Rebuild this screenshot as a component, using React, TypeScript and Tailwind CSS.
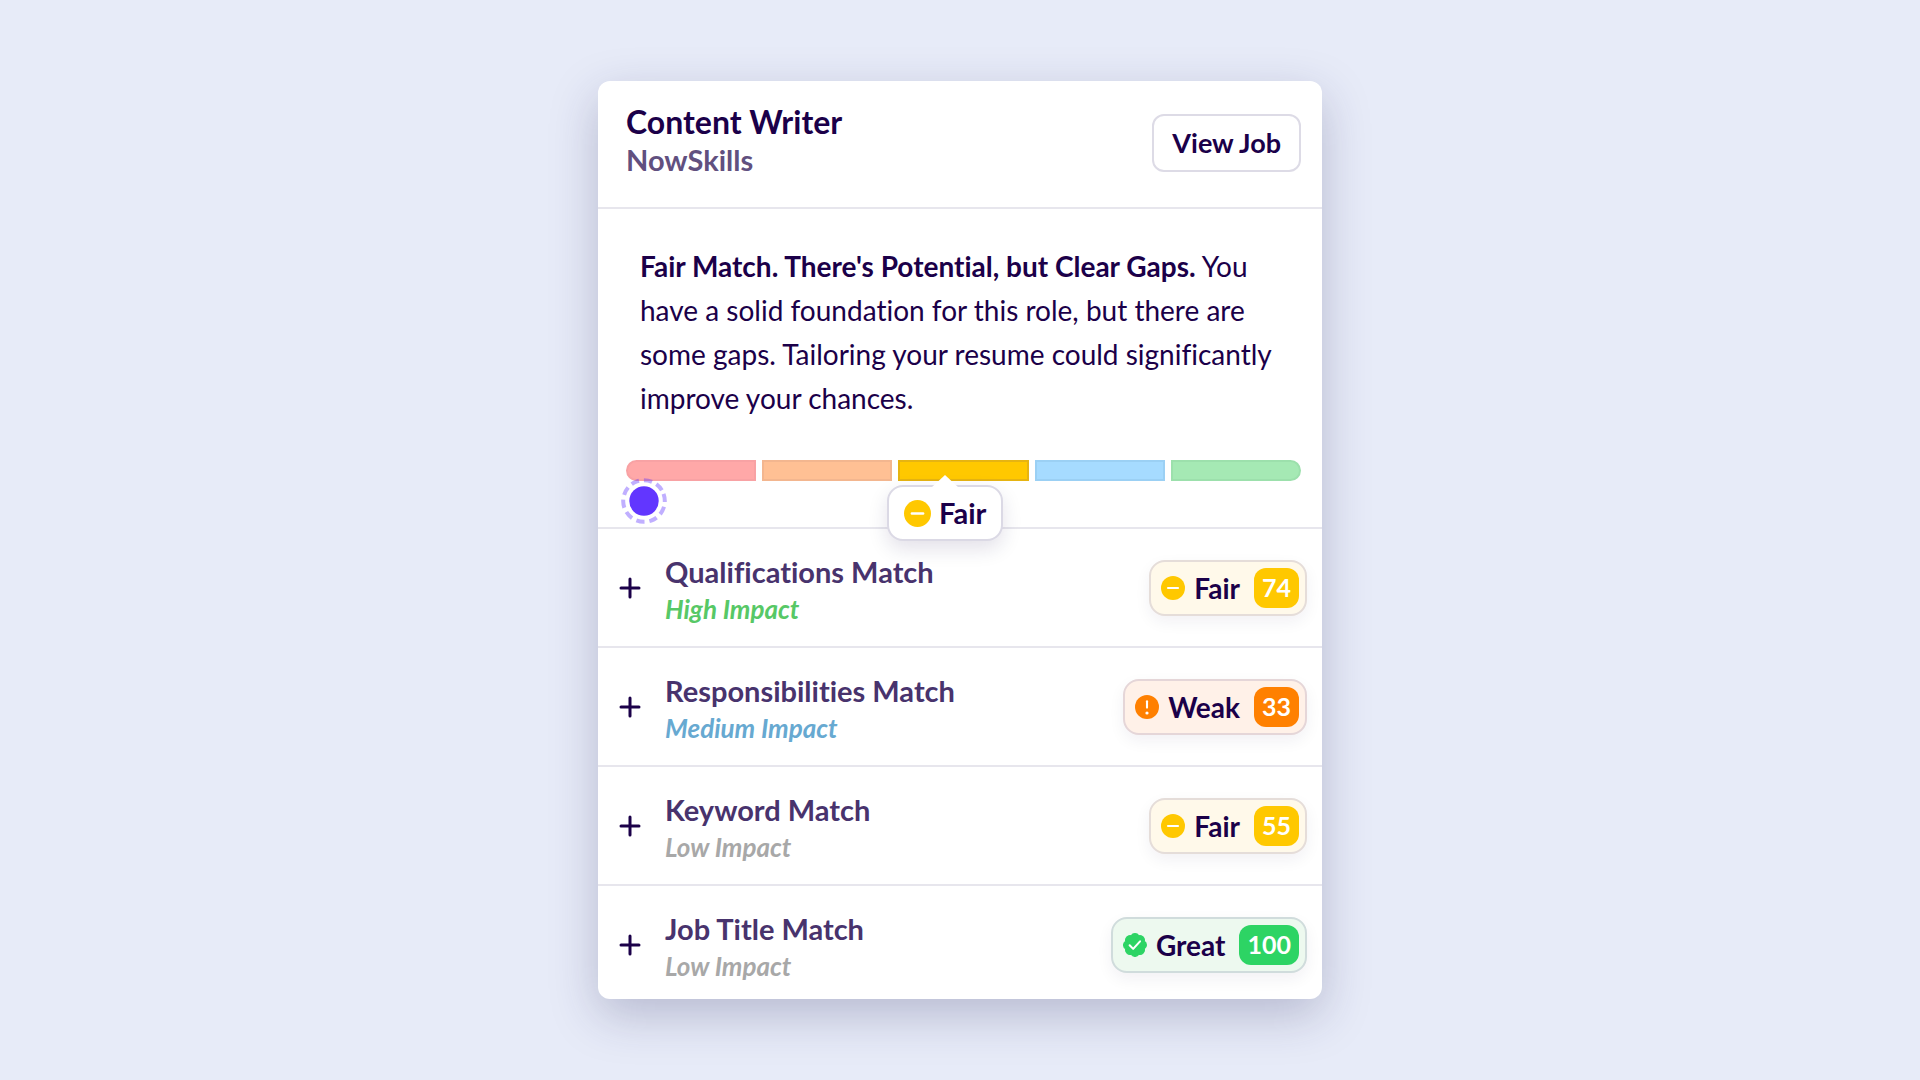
type Level = 'fair' | 'weak' | 'great';

interface Match {
  title: string;
  impact: string;
  impactClass: string;
  level: Level;
  score: number;
}

const MATCHES: Match[] = [
  { title: 'Qualifications Match', impact: 'High Impact', impactClass: 'text-[#57c866]', level: 'fair', score: 74 },
  { title: 'Responsibilities Match', impact: 'Medium Impact', impactClass: 'text-[#67a9d1]', level: 'weak', score: 33 },
  { title: 'Keyword Match', impact: 'Low Impact', impactClass: 'text-[#a8a8a8]', level: 'fair', score: 55 },
  { title: 'Job Title Match', impact: 'Low Impact', impactClass: 'text-[#a8a8a8]', level: 'great', score: 100 },
];

const LEVELS = {
  fair: { label: 'Fair', pill: 'bg-[#fff9ea] border-[#e5ddd9]', score: 'bg-[#ffc800]' },
  weak: { label: 'Weak', pill: 'bg-[#fff1e8] border-[#e5d6d8]', score: 'bg-[#ff8000]' },
  great: { label: 'Great', pill: 'bg-[#edf9ef] border-[#d0dcdc]', score: 'bg-[#2dd464]' },
};

const SEGMENTS = [
  'rounded-l-full border-[#f8a2a4] bg-[#ffa8a8]',
  'border-[#f3b68f] bg-[#ffc094]',
  'border-[#e6b412] bg-[#ffc800]',
  'border-[#9bd0f4] bg-[#a6dbff]',
  'rounded-r-full border-[#9ce0ac] bg-[#a5e9b4]',
];

function LevelIcon({ level, className }: { level: Level; className: string }) {
  if (level === 'great') {
    return (
      <svg viewBox="1.5 1.5 21 21" className={className} aria-hidden="true">
        <path
          d="M3.85 8.62a4 4 0 0 1 4.78-4.77 4 4 0 0 1 6.74 0 4 4 0 0 1 4.78 4.78 4 4 0 0 1 0 6.74 4 4 0 0 1-4.77 4.78 4 4 0 0 1-6.75 0 4 4 0 0 1-4.78-4.77 4 4 0 0 1 0-6.76Z"
          fill="#2dd464"
          stroke="#2dd464"
          strokeLinejoin="round"
        />
        <path d="m7.3 12.2 3.1 3.2 6-6.6" fill="none" stroke="#fff" strokeWidth="1.8" strokeLinecap="round" strokeLinejoin="round" />
      </svg>
    );
  }
  return (
    <svg viewBox="0 0 24 24" className={className} aria-hidden="true">
      <circle cx="12" cy="12" r="12" fill={level === 'fair' ? '#ffc800' : '#ff8000'} />
      {level === 'fair' ? (
        <path d="M7 12h10" stroke="#fff" strokeWidth="2.2" strokeLinecap="round" />
      ) : (
        <>
          <path d="M12 6.2v6.4" stroke="#fff" strokeWidth="2.1" strokeLinecap="round" />
          <circle cx="12" cy="18" r="1.6" fill="#fff" />
        </>
      )}
    </svg>
  );
}

function MatchRow({ match }: { match: Match }) {
  const level = LEVELS[match.level];

  return (
    <li className="flex h-[119px] items-center border-t-2 border-[#e7e6ed] pr-[15px] pl-[21px]">
      <button type="button" aria-label={`Expand ${match.title}`} className="shrink-0">
        <svg viewBox="0 0 22 22" className="size-[22px]" fill="none" stroke="#1b0049" strokeWidth="3" strokeLinecap="round">
          <path d="M11 2v18M2 11h18" />
        </svg>
      </button>
      <div className="ml-6 flex-1 pt-1">
        <h2 className="text-[29px] leading-[38px] font-bold text-[#48336d]">{match.title}</h2>
        <p className={`text-[26px] leading-[36px] font-bold italic ${match.impactClass}`}>{match.impact}</p>
      </div>
      <div className={`flex h-14 items-center rounded-2xl border-2 pr-[6px] pl-[10px] shadow-[0_6px_16px_rgba(27,0,73,0.06)] ${level.pill}`}>
        <LevelIcon level={match.level} className="size-6" />
        <span className="ml-[9px] text-[28px] font-bold">{level.label}</span>
        <span className={`ml-[14px] flex h-10 items-center rounded-xl px-2 text-[25px] font-bold text-white ${level.score}`}>
          {match.score}
        </span>
      </div>
    </li>
  );
}

export default function App() {
  return (
    <div className="flex min-h-screen items-center justify-center bg-[#e7ebf8] font-[Lato,sans-serif] text-[#1b0049] [font-variant-ligatures:none]">
      <main className="w-full max-w-[724px] overflow-hidden rounded-xl bg-white shadow-[0_16px_48px_rgba(40,40,90,0.25)]">
        <header className="flex items-start justify-between pt-[22px] pr-[21px] pb-7 pl-7">
          <div>
            <h1 className="text-[32px] leading-[38px] font-bold">Content Writer</h1>
            <p className="text-[29px] leading-[38px] font-bold text-[#61507f]">NowSkills</p>
          </div>
          <button type="button" className="mt-[11px] h-[58px] rounded-xl border-2 border-[#dddbe6] px-[18px] text-[27px] font-bold">
            View Job
          </button>
        </header>

        <section className="border-t-2 border-[#e7e6ed] pt-[35px] pr-[21px] pb-[46px] pl-7">
          <p className="px-[14px] text-[28px] leading-[44px]">
            <strong className="font-bold">Fair Match. There's Potential, but Clear Gaps.</strong> You have a solid foundation
            for this role, but there are some gaps. Tailoring your resume could significantly improve your chances.
          </p>

          <div className="relative mt-10 flex gap-[6px]">
            {SEGMENTS.map((segment) => (
              <div key={segment} className={`h-[21px] flex-1 border-2 ${segment}`} />
            ))}

            <svg viewBox="0 0 48 48" className="absolute top-[17px] -left-[6px] size-12" aria-hidden="true">
              <circle
                cx="24"
                cy="24"
                r="20.8"
                fill="none"
                stroke="#6236ff"
                strokeOpacity="0.4"
                strokeWidth="4"
                strokeDasharray="8.2 4.87"
                transform="rotate(-20 24 24)"
              />
              <circle cx="24" cy="24" r="14.7" fill="#6236ff" />
            </svg>

            <div className="absolute top-[25px] left-[261px] z-10 flex h-14 items-center gap-2 rounded-2xl border-2 border-[#dbd9e5] bg-white px-[15px] shadow-[0_8px_20px_rgba(27,0,73,0.12)]">
              <svg viewBox="0 0 28 14" className="absolute -top-[13px] left-1/2 h-[14px] w-7 -translate-x-1/2" aria-hidden="true">
                <path d="M0 14 14 1 28 14Z" fill="#fff" />
              </svg>
              <LevelIcon level="fair" className="size-[27px]" />
              <span className="text-[29px] font-bold">Fair</span>
            </div>
          </div>
        </section>

        {/* last row runs slightly past the card edge */}
        <ul className="-mb-1">
          {MATCHES.map((match) => (
            <MatchRow key={match.title} match={match} />
          ))}
        </ul>
      </main>
    </div>
  );
}
